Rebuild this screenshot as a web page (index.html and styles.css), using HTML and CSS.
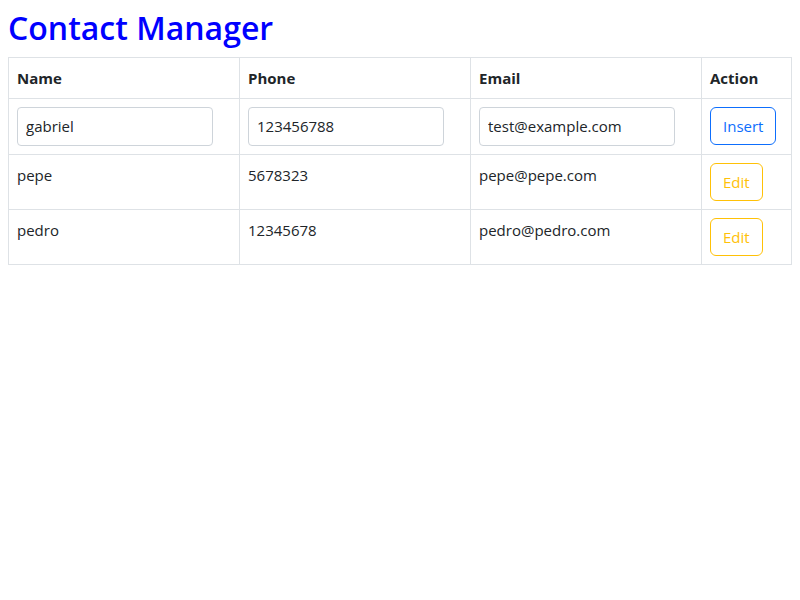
FILE: index.html
```html
<!DOCTYPE html>
<html>
<head>
<meta charset="utf-8">
<link rel="stylesheet" href="styles.css">
</head>
<body>
<h1 class="title">Contact Manager</h1>
<table class="contacts">
  <colgroup>
    <col class="c-name"><col class="c-phone"><col class="c-email"><col class="c-action">
  </colgroup>
  <thead>
    <tr><th>Name</th><th>Phone</th><th>Email</th><th>Action</th></tr>
  </thead>
  <tbody>
    <tr class="entry">
      <td><input class="field" type="text" value="gabriel"></td>
      <td><input class="field" type="text" value="123456788"></td>
      <td><input class="field" type="text" value="test@example.com"></td>
      <td><button class="btn btn-primary">Insert</button></td>
    </tr>
    <tr>
      <td>pepe</td><td>5678323</td><td>pepe@pepe.com</td>
      <td><button class="btn btn-warning">Edit</button></td>
    </tr>
    <tr>
      <td>pedro</td><td>12345678</td><td>pedro@pedro.com</td>
      <td><button class="btn btn-warning">Edit</button></td>
    </tr>
  </tbody>
</table>
</body>
</html>
```
FILE: styles.css
```css
body {
  margin: 8px;
  font-family: "Open Sans", "Noto Sans", sans-serif;
  font-size: 15px;
  line-height: 24px;
  color: #212529;
  background: #fff;
}
.title {
  margin: 0 0 8px 0;
  font-size: 32px;
  font-weight: 600;
  line-height: 40.8px;
  color: #0000ff;
}
.contacts {
  width: 100%;
  border-collapse: collapse;
  table-layout: fixed;
}
.c-name, .c-phone, .c-email { width: 231px; }
.contacts th, .contacts td {
  border: 1px solid #dee2e6;
  padding: 8px;
  text-align: left;
  vertical-align: top;
}
.contacts th { font-weight: 700; }
.field {
  box-sizing: border-box;
  width: 196px;
  height: 39px;
  padding: 6px 8px;
  font: inherit;
  color: #212529;
  border: 1px solid #ced4da;
  border-radius: 4px;
  background: #fff;
  display: block;
}
.btn {
  box-sizing: border-box;
  height: 38px;
  padding: 6px 12px;
  font: inherit;
  background: transparent;
  border: 1px solid;
  border-radius: 6px;
  display: block;
}
.btn-primary { color: #0d6efd; border-color: #0d6efd; }
.btn-warning { color: #ffc107; border-color: #ffc107; }
```
